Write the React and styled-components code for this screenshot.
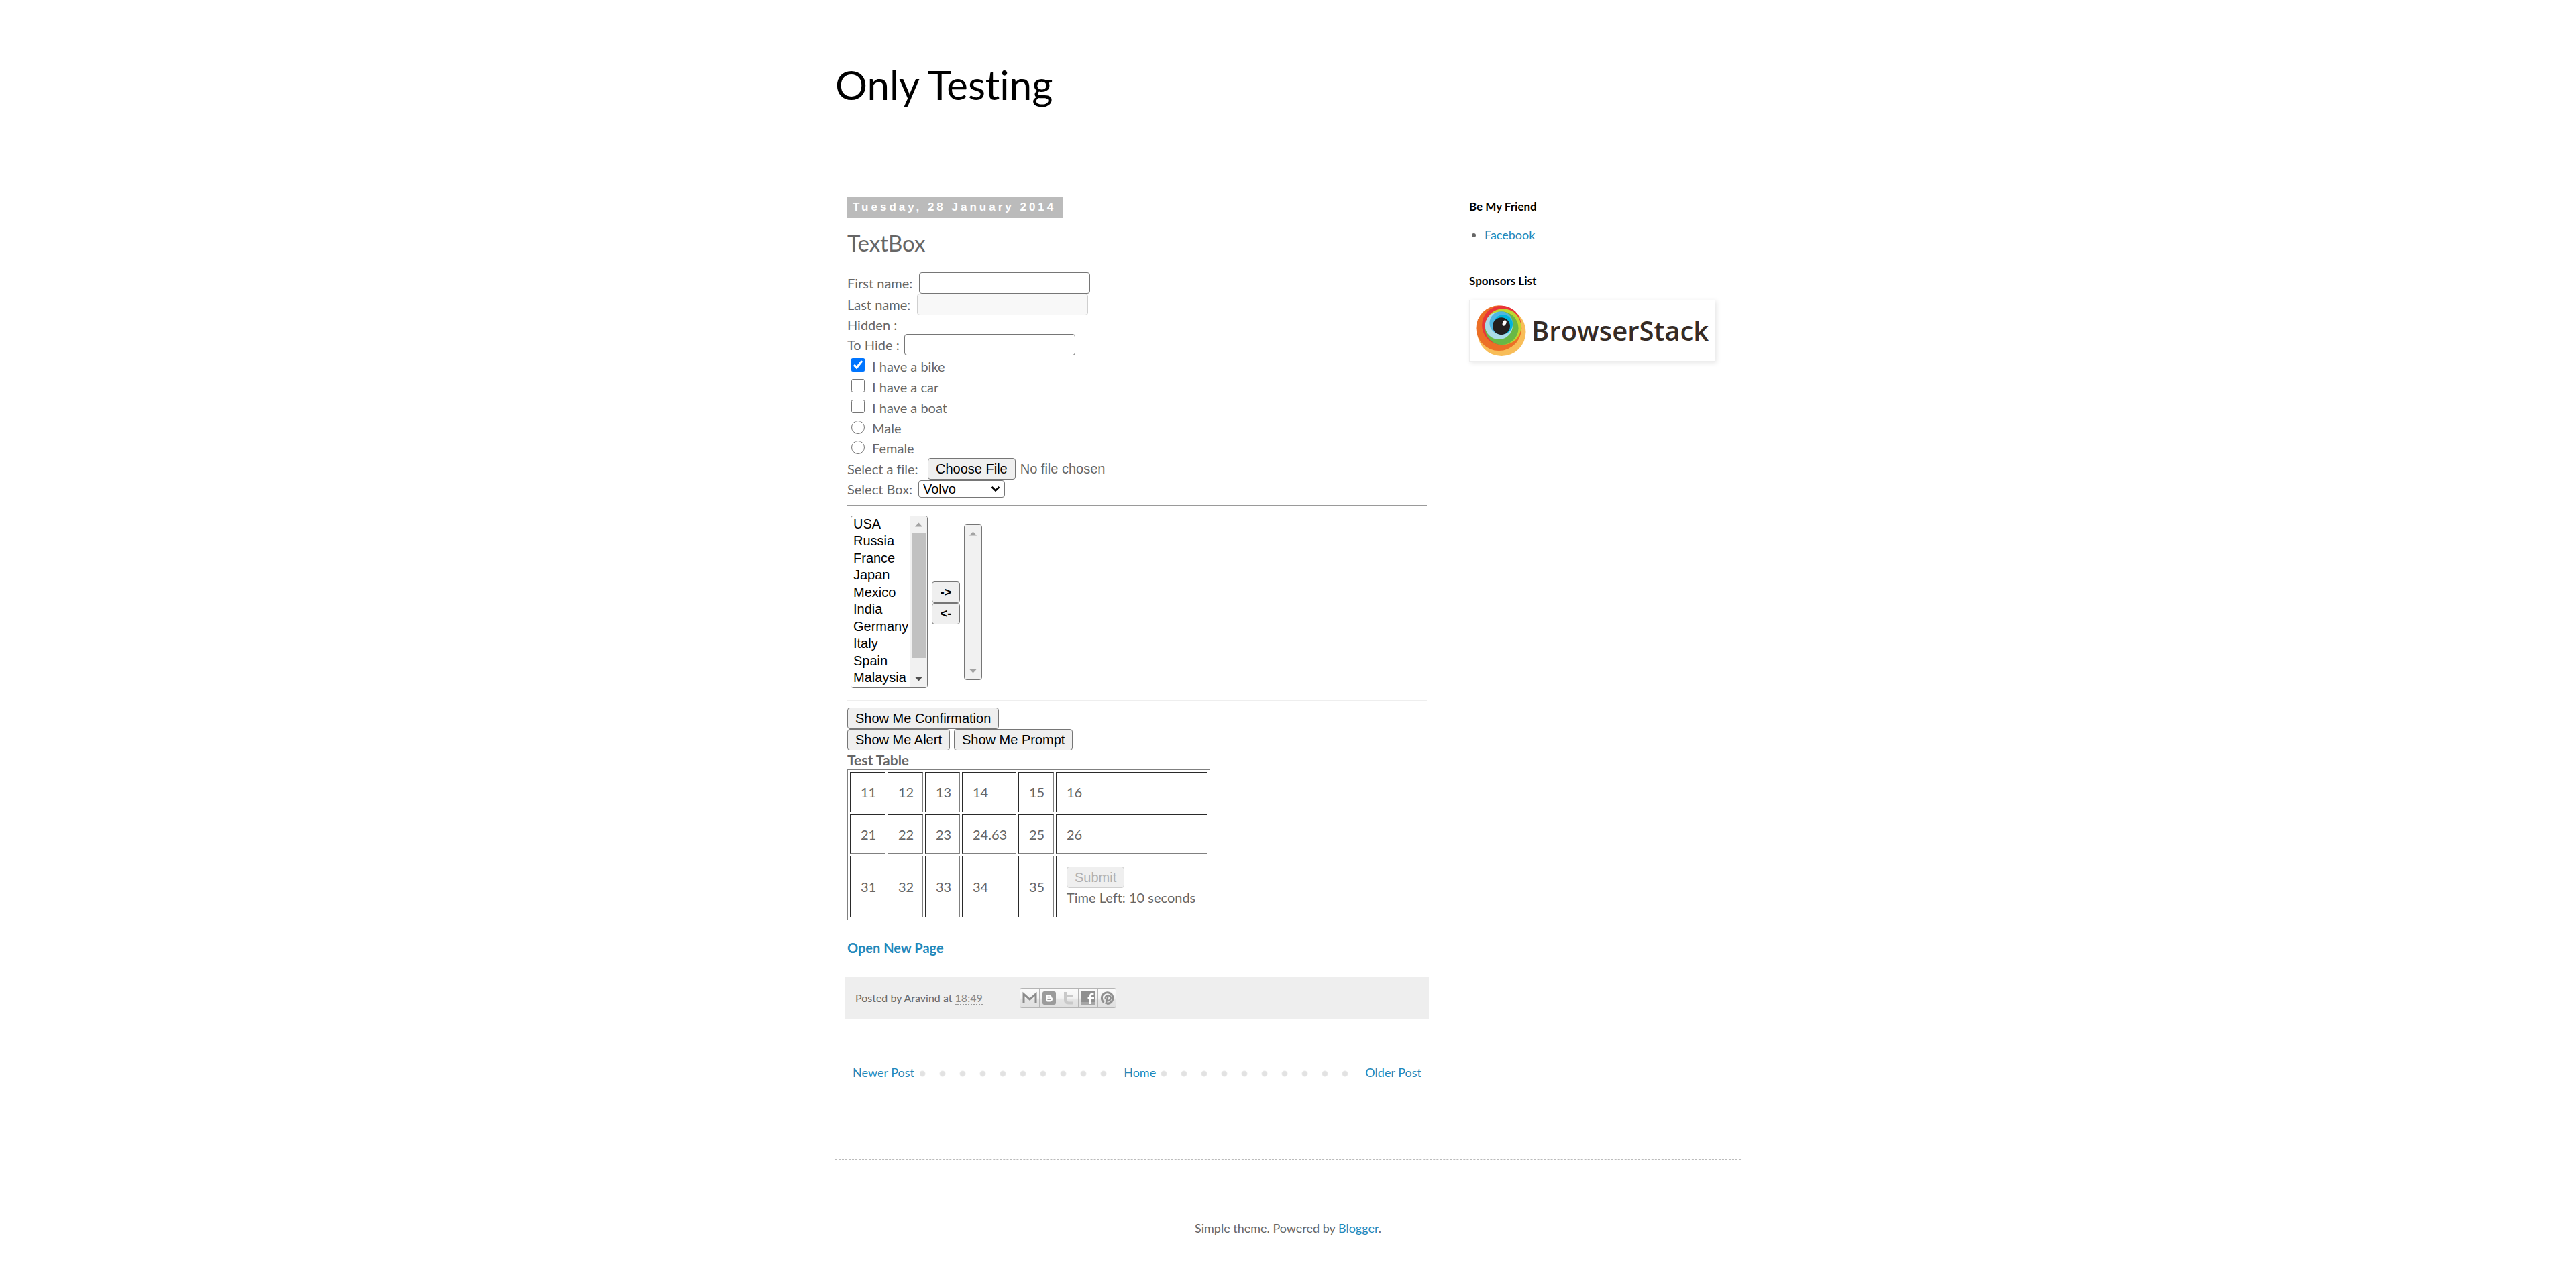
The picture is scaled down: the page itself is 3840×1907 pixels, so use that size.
import React, { useState } from 'react';
import styled, { createGlobalStyle, css } from 'styled-components';

const ink = '#666666';
const link = '#2288bb';
const body = '"Trebuchet MS", Lato, sans-serif';
const control = 'Arial, "Liberation Sans", sans-serif';

const GlobalStyle = createGlobalStyle`
  *, *::before, *::after { box-sizing: border-box; }
  body {
    margin: 0;
    background: #fff;
    color: ${ink};
    font: 20px/28px ${body};
    font-variant-ligatures: none;
  }
  a { color: ${link}; text-decoration: none; }
  a:hover { color: #33aaff; text-decoration: underline; }
`;

const Page = styled.div`
  max-width: 1350px;
  margin: 0 auto;
  padding-top: 90px;
`;

const Title = styled.h1`
  margin: 0 0 131px;
  color: #000;
  font-size: 60px;
  font-weight: 400;
  line-height: 72px;
`;

const Columns = styled.div`
  display: flex;
  gap: 60px;
  padding: 0 15px;
`;

const Main = styled.main`
  flex: 1;
  min-width: 0;
`;

const Sidebar = styled.aside`
  flex: 0 0 390px;
  padding-top: 1px;
  font-size: 18px;
`;

const Article = styled.article`
  padding: 0 3px;
`;

const DateHeader = styled.h2`
  width: fit-content;
  margin: 0;
  padding: 0 10px 0 8px;
  background: #bbbbbb;
  color: #fff;
  font: bold 17px/32px ${control};
  letter-spacing: 4px;
`;

const PostTitle = styled.h3`
  margin: 17px 0 24px;
  font-size: 33px;
  font-weight: 400;
  line-height: 40px;
`;

const Row = styled.div`
  display: flex;
  align-items: center;
  gap: 6px;
  height: ${(p) => p.$h || 32}px;
`;

const Label = styled.label`
  min-width: ${(p) => p.$w || 0}px;
`;

const frame = css`
  border: 1px solid #767676;
  border-radius: 4px;
`;

const TextInput = styled.input`
  ${frame}
  width: 255px;
  height: 32px;
  padding: 0 4px;
  background: #fff;
  font: 20px/24px ${control};
  &:disabled { border-color: #cfcfcf; background: #f8f8f8; }
`;

const Tick = styled.input`
  width: 20px;
  height: 20px;
  margin: 0 5px 3px 6px;
`;

const FileInput = styled.input`
  width: 270px;
  height: 32px;
  font: 20px/24px ${control};
  &::file-selector-button {
    ${frame}
    height: 32px;
    margin: 0 7px 0 0;
    padding: 0 11px;
    background: #efefef;
    color: #000;
    font: 20px/24px ${control};
  }
`;

const Dropdown = styled.select`
  ${frame}
  appearance: none;
  width: 129px;
  height: 26px;
  padding: 0 6px;
  background: #fff url("data:image/svg+xml,%3Csvg xmlns='http://www.w3.org/2000/svg' width='14' height='10'%3E%3Cpath d='M1.5 2l5.5 5.5L12.500 2' fill='none' stroke='%23000' stroke-width='2.6'/%3E%3C/svg%3E") no-repeat right 6px center;
  color: #000;
  font: 20px/24px ${control};
`;

const Rule = styled.hr`
  height: 2px;
  margin: ${(p) => p.$m};
  border: 0;
  border-top: 1px solid #9a9a9a;
  background: #eeeeee;
`;

const Button = styled.button`
  ${frame}
  height: 32px;
  padding: 0 11px;
  background: #efefef;
  color: #000;
  font: ${(p) => (p.$strong ? 'bold' : 'normal')} 20px/24px ${control};
  &:disabled { border-color: #cfcfcf; color: #b0b0b0; }
`;

const Transfer = styled.div`
  display: flex;
  align-items: center;
  gap: 6px;
  padding-left: 5px;
`;

const MoveButtons = styled.div`
  display: flex;
  flex-direction: column;
  padding-top: 2px;
  button { width: 42px; padding: 0; font-size: 18px; }
`;

const ListBox = styled.div`
  position: relative;
  width: ${(p) => p.$w}px;
  height: ${(p) => p.$h}px;
`;

const List = styled.select`
  ${frame}
  width: 100%;
  height: 100%;
  padding: 0;
  background: #fff;
  color: #000;
  font: 20px/25px ${control};
  option { min-height: 25px; padding: 0 3px; line-height: 25px; }
  option:nth-child(even) { min-height: 26px; line-height: 26px; }
`;

const Scrollbar = styled.div`
  position: absolute;
  inset: 1px 1px 1px auto;
  display: flex;
  flex-direction: column;
  align-items: center;
  width: 25px;
  background: #f1f1f1;
  border-radius: 0 3px 3px 0;
  pointer-events: none;
`;

const Thumb = styled.div`
  flex: none;
  width: 21px;
  height: 186px;
  background: #c1c1c1;
`;

const Arrow = styled.svg`
  flex: none;
  display: block;
  width: 11px;
  height: 25px;
  &:last-child { margin-top: auto; }
`;

const ButtonRow = styled.div`
  display: flex;
  gap: 6px;
`;

const DataTable = styled.table`
  border: 1px solid;
  border-color: #808080 #2a2a2a #2a2a2a #808080;
  border-spacing: 3px;
  caption {
    font-size: 21px;
    font-weight: 700;
    line-height: 28px;
    text-align: left;
  }
  tr:nth-child(2) td { height: 59px; }
`;

const Cell = styled.td`
  width: ${(p) => p.$w}px;
  height: 60px;
  padding: 0 10px 0 15px;
  border: 1px solid;
  border-color: #2a2a2a #808080 #808080 #2a2a2a;
  line-height: 28px;
`;

const TallRow = styled.tr`
  td { height: 92px; }
  button { display: block; }
`;

const NewPage = styled.p`
  margin: 27px 0 30px;
  font-weight: 700;
`;

const PostFooter = styled.footer`
  display: flex;
  align-items: center;
  height: 62px;
  padding: 0 15px;
  background: #eeeeee;
  font-size: 16px;
`;

const Byline = styled.span`
  min-width: 245px;
  a { color: #888; border-bottom: 2px dotted #999; }
`;

const Share = styled.div`
  display: grid;
  grid-template-columns: repeat(5, 1fr);
  width: 144px;
  height: 30px;
  border: 1px solid #b5b5b5;
  border-radius: 3px;
  background: linear-gradient(#fbfbfb, #f3f3f3 50%, #e4e4e4 60%, #e0e0e0);
  a + a { border-left: 1px solid #b5b5b5; }
  svg { display: block; width: 28px; height: 28px; }
`;

const Pager = styled.nav`
  display: flex;
  justify-content: space-between;
  margin: 66px 3px 115px;
  background: radial-gradient(circle, #e2e2e2 3px, #e8e8e8 4px, transparent 5px) 7px 2px / 30px 28px repeat-x;
  font-size: 18px;
  a { padding: 0 8px; background: #fff; }
`;

const WidgetTitle = styled.h2`
  margin: 0 0 14px;
  color: #000;
  font-size: 17px;
  font-weight: 700;
  line-height: 28px;
`;

const Links = styled.ul`
  margin: 0 0 41px;
  padding-left: 23px;
`;

const Sponsor = styled.a`
  display: flex;
  align-items: center;
  gap: 8px;
  width: 367px;
  height: 92px;
  padding: 0 9px;
  border: 1px solid #eeeeee;
  background: #fff;
  box-shadow: 2px 2px 7px rgba(0, 0, 0, 0.1);
  && { color: #352b25; }
  font: 600 40px/48px "Open Sans", sans-serif;
  svg { flex: none; width: 75px; height: 76px; margin-bottom: 1px; }
`;

const PageFooter = styled.footer`
  padding: 88px 0 62px;
  border-top: 1px dashed #bbbbbb;
  font-size: 18px;
  text-align: center;
`;

const countries = ['USA', 'Russia', 'France', 'Japan', 'Mexico', 'India', 'Germany', 'Italy', 'Spain', 'Malaysia', 'Greece'];
const widths = [53, 53, 52, 81, 53, 226];
const rows = [
  ['11', '12', '13', '14', '15', '16'],
  ['21', '22', '23', '24.63', '25', '26'],
];

const Up = ({ fill = '#a3a3a3' }) => (
  <Arrow viewBox="0 0 11 25"><path d="M0 15.500L5.500 9.500L11 15.500Z" fill={fill} /></Arrow>
);
const Down = ({ fill = '#a3a3a3' }) => (
  <Arrow viewBox="0 0 11 25"><path d="M0 9.500L5.500 15.500L11 9.500Z" fill={fill} /></Arrow>
);

const shares = [
  ['Email This', <path key="m" d="M5 21V8l9 8 9-8v13" fill="none" stroke="#8c8c8c" strokeWidth="3" />],
  ['BlogThis!', <g key="b"><rect x="4" y="4" width="20" height="20" rx="3" fill="#9b9b9b" /><path d="M11 9.500h3.500a2.500 2.500 0 0 1 2.500 2.500c0 1.500 1.500 1.300 1.500 2.500v1.500a3 3 0 0 1-3 3H11.500a2 2 0 0 1-2-2v-6a1.500 1.500 0 0 1 1.500-1.500z" fill="#fff" stroke="#fff" /><path d="M12 12.500h2.500M12 16.200h4" stroke="#9b9b9b" strokeWidth="1.600" strokeLinecap="round" /></g>],
  ['Share to Twitter', <path key="t" d="M9 5v11.500q0 5 5 5h6M9 11h11" fill="none" stroke="#c9c9c9" strokeWidth="4" strokeLinejoin="round" />],
  ['Share to Facebook', <g key="f"><path d="M4 4h20v20H4z" fill="#8f8f8f" /><path d="M4 20h20v4H4z" fill="#a6a6a6" /><path d="M17.500 23V11q0-3.500 5-3.500M13.500 14.500H23" fill="none" stroke="#fff" strokeWidth="3" /></g>],
  ['Share to Pinterest', <g key="p" fill="none" stroke="#8f8f8f"><path d="M8.500 20.500A8.300 8.300 0 1 1 13 22.300" strokeWidth="3" /><path d="M11 15.500a4 4 0 1 1 4 2.500M14.500 11.500L11.500 23" strokeWidth="2.600" /></g>],
];

function Eye() {
  return (
    <svg viewBox="46 44 225 229" aria-hidden="true">
      <circle cx="161" cy="164" r="109" fill="#f8bd58" />
      <circle cx="149" cy="147" r="102" fill="#ec6f26" />
      <circle cx="161" cy="134" r="88" fill="#e93538" />
      <circle cx="168" cy="141" r="81" fill="#bfd730" />
      <circle cx="162" cy="147" r="75" fill="#69b845" />
      <circle cx="149" cy="136" r="62" fill="#abdbe8" />
      <circle cx="159" cy="124" r="52" fill="#4fb6e3" />
      <circle cx="168" cy="130" r="43" fill="#00b3dd" />
      <circle cx="160" cy="138" r="39" fill="#231f20" />
      <ellipse cx="174" cy="124" rx="8" ry="13" fill="#fff" transform="rotate(22 174 124)" />
    </svg>
  );
}

export default function App() {
  const [vehicles, setVehicles] = useState({ bike: true, car: false, boat: false });
  return (
    <>
      <GlobalStyle />
      <Page>
        <header><Title>Only Testing</Title></header>
        <Columns>
          <Main>
            <Article>
              <DateHeader>Tuesday, 28 January 2014</DateHeader>
              <PostTitle>TextBox</PostTitle>
              <Row><Label $w={101} htmlFor="first">First name:</Label><TextInput id="first" type="text" /></Row>
              <Row><Label $w={98} htmlFor="last">Last name:</Label><TextInput id="last" type="text" disabled /></Row>
              <Row $h={28}>Hidden :</Row>
              <Row><Label $w={79} htmlFor="hide">To Hide :</Label><TextInput id="hide" type="text" /></Row>
              {Object.keys(vehicles).map((name) => (
                <Row key={name} $h={31}>
                  <Tick
                    id={name}
                    type="checkbox"
                    checked={vehicles[name]}
                    onChange={(e) => setVehicles({ ...vehicles, [name]: e.target.checked })}
                  />
                  <Label htmlFor={name}>I have a {name}</Label>
                </Row>
              ))}
              {['Male', 'Female'].map((name) => (
                <Row key={name} $h={30}>
                  <Tick id={name} type="radio" name="gender" />
                  <Label htmlFor={name}>{name}</Label>
                </Row>
              ))}
              <Row><Label $w={114} htmlFor="file">Select a file:</Label><FileInput id="file" type="file" /></Row>
              <Row $h={28}>
                <Label $w={100} htmlFor="car-brand">Select Box:</Label>
                <Dropdown id="car-brand" defaultValue="Volvo">
                  <option>Volvo</option>
                  <option>Audi</option>
                </Dropdown>
              </Row>
              <Rule $m="10px 0 14px" />
              <Transfer>
                <ListBox $w={115} $h={257}>
                  <List size="10" multiple aria-label="Countries">
                    {countries.map((c) => <option key={c}>{c}</option>)}
                  </List>
                  <Scrollbar aria-hidden="true"><Up /><Thumb /><Down fill="#505050" /></Scrollbar>
                </ListBox>
                <MoveButtons>
                  <Button $strong>-&gt;</Button>
                  <Button $strong>&lt;-</Button>
                </MoveButtons>
                <ListBox $w={27} $h={232}>
                  <List size="10" multiple aria-label="Selected countries" />
                  <Scrollbar aria-hidden="true"><Up /><Down /></Scrollbar>
                </ListBox>
              </Transfer>
              <Rule $m="17px 0 10px" />
              <ButtonRow><Button>Show Me Confirmation</Button></ButtonRow>
              <ButtonRow><Button>Show Me Alert</Button><Button>Show Me Prompt</Button></ButtonRow>
              <DataTable>
                <caption>Test Table</caption>
                <tbody>
                  {rows.map((r) => (
                    <tr key={r[0]}>{r.map((v, i) => <Cell key={v} $w={widths[i]}>{v}</Cell>)}</tr>
                  ))}
                  <TallRow>
                    {['31', '32', '33', '34', '35'].map((v, i) => <Cell key={v} $w={widths[i]}>{v}</Cell>)}
                    <Cell $w={226}><Button disabled>Submit</Button>Time Left: 10 seconds</Cell>
                  </TallRow>
                </tbody>
              </DataTable>
              <NewPage><a href="#new">Open New Page</a></NewPage>
            </Article>
            <PostFooter>
              <Byline>Posted by Aravind at <a href="#post">18:49</a></Byline>
              <Share>
                {shares.map(([name, art]) => (
                  <a key={name} href="#share" aria-label={name}><svg viewBox="0 0 28 28">{art}</svg></a>
                ))}
              </Share>
            </PostFooter>
            <Pager>
              <a href="#newer">Newer Post</a>
              <a href="#home">Home</a>
              <a href="#older">Older Post</a>
            </Pager>
          </Main>
          <Sidebar>
            <WidgetTitle>Be My Friend</WidgetTitle>
            <Links><li><a href="#facebook">Facebook</a></li></Links>
            <WidgetTitle>Sponsors List</WidgetTitle>
            <Sponsor href="#browserstack"><Eye />BrowserStack</Sponsor>
          </Sidebar>
        </Columns>
        <PageFooter>Simple theme. Powered by <a href="#blogger">Blogger</a>.</PageFooter>
      </Page>
    </>
  );
}
